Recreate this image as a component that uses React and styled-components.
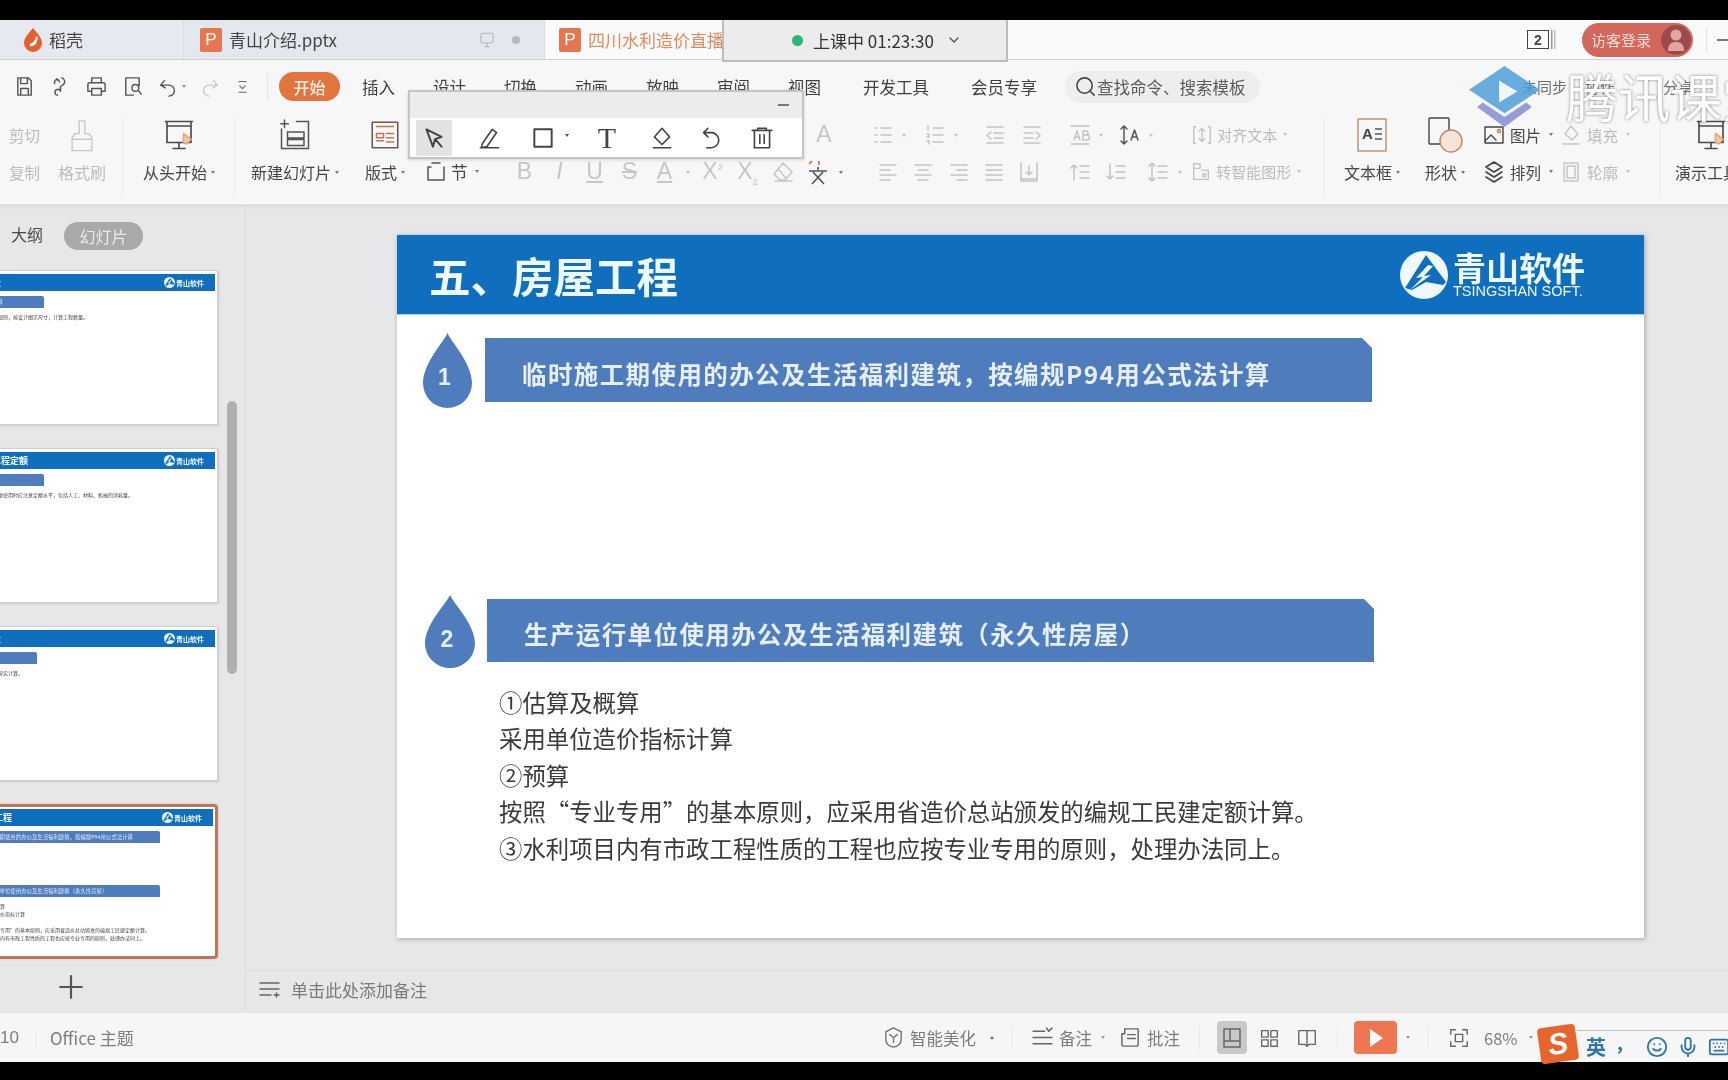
import React from 'react';
import styled, { createGlobalStyle } from 'styled-components';
import { Search, ChevronDown, Mic, Smile, Keyboard } from 'lucide-react';

const CJK = '"Noto Sans CJK SC", "Liberation Sans", sans-serif';

const Global = createGlobalStyle`
  html, body { margin: 0; padding: 0; background: #000; }
  * { box-sizing: border-box; }
`;

const Page = styled.div`
  position: relative;
  width: 1728px;
  height: 1080px;
  overflow: hidden;
  background: #000;
  padding: 20px 0 18px;
  display: flex;
  flex-direction: column;
  font-family: ${CJK};
  color: #444;
  filter: blur(0.6px);
`;

/* tab strip */
const TabBar = styled.div`
  height: 40px;
  flex: none;
  display: flex;
  background: #fafafa;
  border-bottom: 1px solid #cfd0d3;
`;

const Tab = styled.div`
  width: ${p => p.$w}px;
  display: flex;
  align-items: center;
  gap: ${p => p.$gap ?? 7}px;
  padding-left: ${p => p.$pl}px;
  background: ${p => p.$bg};
  border-right: 1px solid #d9dde4;
  font-size: 17px;
  color: ${p => p.$c || '#444'};
  white-space: nowrap;
  overflow: hidden;
`;

const PBadge = styled.span`
  width: 22px;
  height: 24px;
  flex: none;
  background: #e5764f;
  border-radius: 2px;
  color: #fff;
  font: 17px "Liberation Sans", sans-serif;
  display: flex;
  align-items: center;
  justify-content: center;
`;

const TabTail = styled.div`
  margin-left: auto;
  display: flex;
  align-items: center;
  gap: 16px;
  padding-right: 24px;
`;

const TabRight = styled.div`
  margin-left: auto;
  display: flex;
  align-items: center;
`;

const PageCount = styled.span`
  width: 22px;
  height: 19px;
  border: 1.5px solid #444;
  font: bold 14px "Liberation Sans", sans-serif;
  display: flex;
  align-items: center;
  justify-content: center;
  box-shadow: 2px 0 0 #fafafa, 3.5px 0 0 #999, 5px 0 0 #fafafa, 6.5px 0 0 #bbb;
`;

const LoginPill = styled.div`
  width: 111px;
  height: 34px;
  margin-left: 33px;
  border-radius: 17px;
  background: #d2685c;
  color: #f6dcd8;
  font-size: 15px;
  display: flex;
  align-items: center;
  justify-content: space-between;
  padding: 0 2px 0 9px;
`;

const Avatar = styled.span`
  width: 30px;
  height: 30px;
  border-radius: 50%;
  background: #9c4b4c;
  display: flex;
  align-items: center;
  justify-content: center;
`;

const WinSep = styled.span`
  width: 1px;
  height: 22px;
  background: #e0e0e0;
  margin: 0 10px 0 13px;
`;

/* menu row */
const MenuRow = styled.div`
  height: 45px;
  flex: none;
  display: flex;
  align-items: center;
  padding-top: 8px;
  background: #f7f7f8;
`;

const QuickBar = styled.div`
  width: 268px;
  height: 28px;
  flex: none;
  display: flex;
  align-items: center;
  gap: 13px;
  padding-left: 13px;
  border-right: 1px solid #e4e4e4;
`;

const StartPill = styled.div`
  width: 61px;
  height: 29px;
  margin: 0 22px 0 11px;
  border-radius: 15px;
  background: #e2743f;
  color: #fdeee4;
  font-size: 16px;
  font-weight: 500;
  display: flex;
  align-items: center;
  justify-content: center;
`;

const MenuItem = styled.span`
  font-size: 16.5px;
  margin-right: ${p => p.$mr || 38}px;
  color: #3f3f3f;
  white-space: nowrap;
`;

const SearchPill = styled.div`
  width: 195px;
  height: 32px;
  margin-left: 0;
  border-radius: 16px;
  background: #eeeeef;
  padding-left: 9px;
  display: flex;
  align-items: center;
  gap: 0;
  font-size: 16.5px;
  color: #5a5a5a;
  white-space: nowrap;
  overflow: hidden;
`;

const SyncArea = styled.div`
  margin-left: auto;
  display: flex;
  align-items: center;
  width: 237px;
  font-size: 15px;
  color: #6c6c6c;
  white-space: nowrap;
`;

const SyncText = styled.span`
  margin-left: ${p => p.$ml}px;
`;

/* ribbon */
const Ribbon = styled.div`
  height: 100px;
  flex: none;
  display: flex;
  background: #f7f7f8;
  padding: 11px 0 7px;
  border-bottom: 1px solid #dfdfe1;
  box-shadow: 0 2px 3px rgba(0, 0, 0, 0.06);
  position: relative;
  overflow: hidden;
`;

const Group = styled.div`
  width: ${p => p.$w}px;
  flex: none;
  display: flex;
  border-right: ${p => (p.$line ? '1px solid #ececec' : 'none')};
`;

const Big = styled.div`
  width: ${p => p.$w}px;
  flex: none;
  display: flex;
  flex-direction: column;
  align-items: center;
  color: ${p => (p.$off ? '#bdbdbd' : '#454545')};
`;

const BigIcon = styled.div`
  height: 38px;
  display: flex;
  align-items: center;
  justify-content: center;
`;

const BigLabel = styled.div`
  height: 36px;
  font-size: 16px;
  display: flex;
  align-items: center;
  white-space: nowrap;
`;

const Caret = styled.i`
  display: inline-block;
  margin-left: ${p => p.$ml ?? 4}px;
  border-left: 2.5px solid transparent;
  border-right: 2.5px solid transparent;
  border-top: 3px solid ${p => p.$c || '#777'};
  transform: ${p => (p.$up ? 'rotate(180deg)' : 'none')};
`;

const Stack = styled.div`
  width: ${p => p.$w}px;
  flex: none;
  padding-left: ${p => p.$pl || 0}px;
`;

const Row = styled.div`
  height: 37px;
  display: flex;
  align-items: center;
  padding-left: ${p => p.$pl || 0}px;
  justify-content: ${p => p.$end || 'flex-start'};
  gap: ${p => p.$gap || 0}px;
  font-size: ${p => p.$fs || 15.5}px;
  color: ${p => (p.$off ? '#bcbcbc' : '#454545')};
  white-space: nowrap;
`;

const Slot = styled.span`
  position: relative;
  width: ${p => p.$w || 30}px;
  height: 30px;
  flex: none;
  margin-left: ${p => p.$ml || 0}px;
  display: flex;
  align-items: center;
  justify-content: center;
  color: ${p => p.$c || '#c3c3c3'};
`;

const SlotCaret = styled(Caret)`
  position: absolute;
  right: -8px;
  top: 14px;
`;

const FontGlyph = styled.span`
  font: ${p => (p.$b ? 'bold ' : '')}${p => (p.$i ? 'italic ' : '')}23px "Liberation Sans", sans-serif;
  text-decoration: ${p => p.$u || 'none'};
  color: #c6c6c6;
  sup, sub { font-size: 9px; line-height: 0; }
`;

/* work area */
const Work = styled.div`
  flex: 1;
  min-height: 0;
  display: flex;
  background: #e7e7e9;
`;

const Side = styled.aside`
  position: relative;
  width: 246px;
  flex: none;
  border-right: 1px solid #dcdcde;
  overflow: hidden;
`;

const SideTabs = styled.div`
  height: 65px;
  padding-top: 17px;
  padding-left: 11px;
  display: flex;
  align-items: flex-start;
  gap: 21px;
  font-size: 16px;
  color: #4a4a4a;
`;

const OutlineTab = styled.span`
  height: 24px;
  line-height: 24px;
`;

const SlidesTab = styled.span`
  width: 79px;
  height: 28px;
  border-radius: 14px;
  background: #a9a9ab;
  color: #e9e9e9;
  display: flex;
  align-items: center;
  justify-content: center;
`;

const Thumbs = styled.div`
  margin-left: -52px;
  display: flex;
  flex-direction: column;
  gap: 23px;
`;

const Thumb = styled.div`
  width: 270px;
  height: 155px;
  background: #fff;
  padding: ${p => (p.$on ? '2px 0 0 0' : '3px 0 0 0')};
  border: ${p => (p.$on ? '3px solid #b9785a' : '1px solid #cfcfd1')};
  border-radius: ${p => (p.$on ? '4px' : '0')};
  box-shadow: ${p => (p.$on ? '0 0 3px #eebf9f' : '1px 1px 2px rgba(0,0,0,.12)')};
  overflow: hidden;
`;

const ThumbHead = styled.div`
  height: 17px;
  margin-right: 2px;
  background: #0f6ebd;
  padding: 0 11px 0 7px;
  display: flex;
  align-items: center;
  justify-content: space-between;
  color: #f2fbff;
  font-size: 9px;
  font-weight: 700;
`;

const ThumbLogo = styled.span`
  display: flex;
  align-items: center;
  gap: 1px;
  font-size: 7px;
`;

const ThumbBanner = styled.div`
  width: ${p => p.$w}px;
  height: 12px;
  margin: ${p => p.$top}px 0 0 19px;
  background: #4f7cbc;
  border-radius: 0 2px 0 0;
  color: #dfe9f5;
  font-size: 5.4px;
  line-height: 12px;
  padding-left: 8px;
  white-space: nowrap;
  overflow: hidden;
`;

const ThumbLine = styled.div`
  margin: ${p => p.$top || 0}px 0 0 24px;
  font-size: 5px;
  line-height: 8px;
  color: #444;
  white-space: nowrap;
`;

const ScrollThumb = styled.div`
  position: absolute;
  left: 227px;
  top: 196px;
  width: 10px;
  height: 273px;
  border-radius: 5px;
  background: #b0b0b2;
`;

const AddSlide = styled.div`
  margin: 13px 0 0 56px;
  width: 30px;
  height: 30px;
  display: flex;
  align-items: center;
  justify-content: center;
  color: #555;
`;

const Main = styled.main`
  flex: 1;
  min-width: 0;
  display: flex;
  flex-direction: column;
`;

const SlideArea = styled.div`
  flex: 1;
  min-height: 0;
  padding: 30px 0 0 151px;
`;

const Slide = styled.section`
  width: 1247px;
  height: 703px;
  background: #fff;
  box-shadow: 1px 1px 5px rgba(0, 0, 0, 0.3);
`;

const SlideHead = styled.header`
  height: 80px;
  background: #0f6ebd;
  display: flex;
  align-items: center;
  justify-content: space-between;
  padding: 0 59px 0 32px;
  border-bottom: 1px solid #9fdcf5;
`;

const SlideTitle = styled.h1`
  margin: 2px 0 0;
  font-size: 41.5px;
  line-height: 1;
  font-weight: 700;
  color: #eefaff;
`;

const Logo = styled.div`
  display: flex;
  align-items: center;
  gap: 5px;
  color: #eefaff;
`;

const LogoText = styled.div`
  display: flex;
  flex-direction: column;
  width: 132px;
`;

const LogoCn = styled.span`
  font-size: 33px;
  line-height: 33px;
  font-weight: 700;
`;

const LogoEn = styled.span`
  font: 14.5px/14px "Liberation Sans", sans-serif;
  white-space: nowrap;
`;

const Point = styled.div`
  display: flex;
  gap: ${p => p.$gap}px;
  margin: ${p => p.$top}px 0 0 ${p => p.$left}px;
`;

const DropWrap = styled.div`
  position: relative;
  width: ${p => p.$w}px;
  height: ${p => p.$h}px;
  flex: none;
`;

const DropNum = styled.span`
  position: absolute;
  left: 0;
  right: 6px;
  top: 26px;
  text-align: center;
  color: #e6eff8;
  font: bold 23px/36px "Liberation Sans", sans-serif;
`;

const Banner = styled.div`
  width: 887px;
  height: ${p => p.$h}px;
  margin-top: ${p => p.$mt}px;
  background: #4f7cbc;
  clip-path: polygon(0 0, 877px 0, 100% 10px, 100% 100%, 0 100%);
  color: #e6eef6;
  font-size: 24.5px;
  font-weight: 700;
  letter-spacing: ${p => p.$ls}px;
  display: flex;
  align-items: center;
  padding-left: ${p => p.$pl}px;
  padding-top: 6px;
  white-space: nowrap;
`;

const Body = styled.div`
  margin: 16px 0 0 102px;
  font-size: 23.4px;
  line-height: 36.4px;
  color: #3a3a3a;
  white-space: nowrap;
`;

const NotesBar = styled.div`
  height: 43px;
  flex: none;
  border-top: 1px solid #dcdcde;
  display: flex;
  align-items: center;
  gap: 10px;
  padding: 0 0 6px 11px;
  font-size: 17px;
  color: #7a7a7a;
`;

/* status bar */
const StatusBar = styled.footer`
  height: 49px;
  flex: none;
  display: flex;
  align-items: center;
  background: #f6f6f7;
  font-size: 16.500px;
  color: #7c7c7c;
`;

const StatusLeft = styled.div`
  width: 882px;
  flex: none;
  display: flex;
  align-items: center;
  font-size: 17px;
`;

const PageNo = styled.span`
  width: 37px;
  font-family: "Liberation Sans", sans-serif;
  border-right: 1px solid #ebebeb;
`;

const ThemeName = styled.span`
  margin-left: 13px;
`;

const StatusItem = styled.div`
  margin-left: ${p => p.$ml || 0}px;
  display: flex;
  align-items: center;
  gap: ${p => p.$gap ?? 6}px;
  white-space: nowrap;
`;

const StatusSep = styled.span`
  width: 1px;
  height: 26px;
  margin-left: ${p => p.$ml || 0}px;
  background: #ebebeb;
`;

const ViewTile = styled.span`
  width: 30px;
  height: 33px;
  margin-left: ${p => p.$ml || 0}px;
  border-radius: 4px;
  background: ${p => (p.$on ? '#c8c8ca' : 'transparent')};
  display: flex;
  align-items: center;
  justify-content: center;
`;

const PlayBtn = styled.span`
  width: 43px;
  height: 33px;
  margin-left: 16px;
  border-radius: 4px;
  background: #ef7650;
  display: flex;
  align-items: center;
  justify-content: center;
`;

/* overlays */
const LivePopup = styled.div`
  position: absolute;
  left: 722px;
  top: 20px;
  width: 286px;
  height: 42px;
  background: #ececec;
  border: 2px solid #bdbdbd;
  border-top: none;
  display: flex;
  align-items: center;
  padding-left: 68px;
  gap: 10px;
  font-size: 17px;
  color: #333;
  white-space: nowrap;
`;

const LiveDot = styled.span`
  width: 11px;
  height: 11px;
  border-radius: 50%;
  background: #27b874;
`;

const DrawBar = styled.div`
  position: absolute;
  left: 408px;
  top: 90px;
  width: 396px;
  height: 69px;
  background: #fff;
  border: 2px solid #c4c4c4;
  box-shadow: 0 1px 3px rgba(0, 0, 0, 0.15);
`;

const DrawHead = styled.div`
  height: 26px;
  background: #ececed;
  display: flex;
  justify-content: flex-end;
  align-items: center;
  padding-right: 13px;
`;

const Dash = styled.span`
  width: 11px;
  height: 2px;
  flex: none;
  background: #777;
`;

const DrawTools = styled.div`
  display: flex;
  align-items: center;
  height: 40px;
  padding-left: 6px;
`;

const DrawTool = styled.span`
  position: relative;
  width: 36px;
  height: 36px;
  margin-left: ${p => p.$ml || 0}px;
  border-radius: 2px;
  background: ${p => (p.$on ? '#e2e2e2' : 'transparent')};
  color: #444;
  display: flex;
  align-items: center;
  justify-content: center;
`;

const ToolLetter = styled.span`
  font: 30px "Liberation Serif", serif;
  color: #444;
`;

const Watermark = styled.div`
  position: absolute;
  left: 1469px;
  top: 63px;
  display: flex;
  align-items: flex-start;
  gap: 26px;
`;

const WaterText = styled.span`
  font-size: 52px;
  line-height: 58px;
  margin-top: 4px;
  font-weight: 400;
  color: #fff;
  white-space: nowrap;
  text-shadow: 0 0 3px #777;
`;

const Ime = styled.div`
  position: absolute;
  left: 1539px;
  top: 1025px;
  width: 189px;
  height: 37px;
  display: flex;
  align-items: flex-end;
`;

const ImeLogo = styled.span`
  width: 38px;
  height: 36px;
  flex: none;
  background: #e8642d;
  border-radius: 4px;
  transform: rotate(-8deg);
  color: #fff;
  font: italic bold 30px/36px "Liberation Sans", sans-serif;
  text-align: center;
`;

const ImeStrip = styled.div`
  flex: 1;
  height: 32px;
  border-top: 1px solid #bdbdbd;
  background: #f6f6f7;
  display: flex;
  align-items: center;
  gap: 9px;
  padding-left: 9px;
  color: #2f74ad;
`;

const ImeLang = styled.span`
  font-size: 20px;
  font-weight: 700;
`;

const ImeMark = styled.span`
  width: 22px;
  font-size: 18px;
  font-weight: 700;
  margin-top: -8px;
`;

const Svg = ({ s = 24, w, h, vb = '0 0 24 24', c = 'currentColor', sw = 1.5, children }) => (
  <svg width={w || s} height={h || s} viewBox={vb} fill="none" stroke={c} strokeWidth={sw} strokeLinecap="round" strokeLinejoin="round">
    {children}
  </svg>
);

const Line = ({ d, s = 24, c, sw }) => <Svg s={s} c={c} sw={sw}><path d={d} /></Svg>;

const Drop = () => (
  <svg width="100%" height="100%" viewBox="0 0 50 75" preserveAspectRatio="none">
    <path d="M25 0C22 8 0 30 0 50a25 25 0 0 0 50 0C50 30 28 8 25 0Z" fill="#4f7cbc" />
  </svg>
);

const LogoMark = ({ s = 48 }) => (
  <svg width={s} height={s} viewBox="0 0 48 48">
    <circle cx="24" cy="24" r="24" fill="#eefaff" />
    <path d="M26 4 5 37l7 2 14-8 17 3 3-3L26 4Z" fill="#0f6ebd" />
    <path d="M28 14 16 27l7-1-13 13 21-15-7 1 9-10Z" fill="#eefaff" />
  </svg>
);

const paths = {
  bullets: 'M10 5h10M10 12h10M10 19h10M4 5h2M4 12h2M4 19h2',
  numbers: 'M10 5h10M10 12h10M10 19h10M5 3v4M4 11h2v3H4M4 18h2v3',
  outdent: 'M4 4h16M11 10h9M11 15h9M4 20h16M8 9l-4 3.5L8 16',
  indent: 'M4 4h16M4 10h9M4 15h9M4 20h16M16 9l4 3.5-4 3.5',
  ab: 'M3 3h18M3 21h18M6 17l3-9 3 9M7 14h4M15 8h3a2 2 0 0 1 0 4h-3zM15 12h4a2.5 2.5 0 0 1 0 5h-4z',
  spacing: 'M6 3v18M3 6l3-3 3 3M3 18l3 3 3-3M13 17l3.5-10L20 17M14 14h5',
  left: 'M4 5h16M4 10h10M4 15h16M4 20h10',
  center: 'M4 5h16M7 10h10M4 15h16M7 20h10',
  right: 'M4 5h16M10 10h10M4 15h16M10 20h10',
  justify: 'M4 5h16M4 10h16M4 15h16M4 20h16',
  columns: 'M4 3v18h16V3M12 6v9M9 12l3 3 3-3M4 19h16',
  lineUp: 'M5 20V5M2 8l3-3 3 3M11 6h9M11 12h9M11 18h9',
  lineDown: 'M5 4v15M2 16l3 3 3-3M11 6h9M11 12h9M11 18h9',
  lineBoth: 'M5 3v18M2 6l3-3 3 3M2 18l3 3 3-3M11 6h9M11 12h9M11 18h9',
};

const row1 = [
  { d: 'bullets', caret: true, ml: 8 },
  { d: 'numbers', ml: 22, caret: true },
  { d: 'outdent', ml: 30 },
  { d: 'indent', ml: 7 },
  { d: 'ab', ml: 18, caret: true },
  { d: 'spacing', ml: 20, caret: true, c: '#555' },
];

const row2 = [
  { d: 'left', ml: 13 },
  { d: 'center', ml: 5 },
  { d: 'right', ml: 6 },
  { d: 'justify', ml: 5 },
  { d: 'columns', ml: 5 },
  { d: 'lineUp', ml: 22 },
  { d: 'lineDown', ml: 6 },
  { d: 'lineBoth', ml: 12, caret: true },
];

const IconRow = ({ items }) =>
  items.map(it => (
    <Slot key={it.d} $ml={it.ml} $c={it.c}>
      <Line d={paths[it.d]} s={24} />
      {it.caret && <SlotCaret $c="#c3c3c3" />}
    </Slot>
  ));

const thumbs = [
  { title: '三、工程量', banner: 43, first: '工程量计算', lines: ['工程量计算规则，按设计图示尺寸，计算工程数量。'] },
  { title: '二、建筑工程定额', banner: 43, first: '定额说明', lines: ['建筑工程定额使用时应注意定额水平，包括人工、材料、机械的消耗量。'] },
  { title: '四、工程量', banner: 36, first: '工程说明', lines: ['详见规范，按实计算。'] },
];

const ThumbCard = ({ title, children, on }) => (
  <Thumb $on={on}>
    <ThumbHead>
      <span>{title}</span>
      <ThumbLogo><LogoMark s={11} />青山软件</ThumbLogo>
    </ThumbHead>
    {children}
  </Thumb>
);

export default function App() {
  return (
    <Page>
      <Global />
      <TabBar>
        <Tab $w={184} $pl={22} $gap={5} $bg="#e6e9ef">
          <svg width="22" height="26" viewBox="0 0 22 26">
            <path d="M11 1C6 7 2 11 2 16a9 9 0 0 0 18 0C20 11 16 7 11 1Z" fill="#e5602c" />
            <path d="M8 18c4-1 6-4 7-8-1 5-2 9-7 8Z" stroke="#fff" strokeWidth="2" fill="none" />
          </svg>
          稻壳
        </Tab>
        <Tab $w={361} $pl={16} $bg="#e3e7ee">
          <PBadge>P</PBadge>
          青山介绍.pptx
          <TabTail>
            <Svg s={18} c="#b5bac2"><rect x="4" y="3" width="16" height="13" rx="2" /><path d="M12 16v5M9 21h6" /></Svg>
            <svg width="8" height="8"><circle cx="4" cy="4" r="4" fill="#b5bac2" /></svg>
          </TabTail>
        </Tab>
        <Tab $w={180} $pl={14} $bg="#fafafa" $c="#e28a5f">
          <PBadge>P</PBadge>
          四川水利造价直播
        </Tab>
        <TabRight>
          <PageCount>2</PageCount>
          <LoginPill>
            访客登录
            <Avatar>
              <svg width="20" height="24" viewBox="0 0 20 24"><circle cx="10" cy="7" r="5.5" fill="#e4a4a4" /><path d="M2 23c0-7 3-9 8-9s8 2 8 9Z" fill="#e4a4a4" /></svg>
            </Avatar>
          </LoginPill>
          <WinSep />
          <Dash />
        </TabRight>
      </TabBar>

      <MenuRow>
        <QuickBar>
          <Line d="M5 3h11l3 3v15H5zM8 3v6h7V3M8 21v-7h8v7" s={23} c="#555" />
          <Line d="M13 3a4 4 0 0 1 2 7l-3 2v5M8 4l3 3M9 21a3 3 0 1 1 3-4M6 9a3 3 0 0 1 4-4" s={23} c="#555" />
          <Line d="M7 8V3h10v5M5 8h14a2 2 0 0 1 2 2v7h-4M7 17H3v-7a2 2 0 0 1 2-2M7 14h10v7H7z" s={23} c="#555" />
          <Line d="M19 11V3H5v18h8M15 17a3.5 3.5 0 1 0 0-7 3.5 3.5 0 0 0 0 7ZM18 16l3 4" s={23} c="#555" />
          <StatusItem $gap={3}>
            <Line d="M8 5 4 10l5 3M4 10h9a6 6 0 0 1 0 12" s={22} c="#555" />
            <Caret $c="#999" $ml={0} />
          </StatusItem>
          <Line d="M16 5l4 5-5 3M20 10h-9a6 6 0 0 0 0 12" s={22} c="#c9c9c9" />
          <Line d="M7 5h10M8 11l4 4 4-4M7 20h10" s={17} c="#666" />
        </QuickBar>
        <StartPill>开始</StartPill>
        <MenuItem>插入</MenuItem>
        <MenuItem>设计</MenuItem>
        <MenuItem>切换</MenuItem>
        <MenuItem>动画</MenuItem>
        <MenuItem>放映</MenuItem>
        <MenuItem>审阅</MenuItem>
        <MenuItem $mr={42}>视图</MenuItem>
        <MenuItem $mr={42}>开发工具</MenuItem>
        <MenuItem $mr={28}>会员专享</MenuItem>
        <SearchPill><Search size={23} color="#444" strokeWidth={1.6} />查找命令、搜索模板</SearchPill>
        <SyncArea>
          <SyncText $ml={31}>未同步</SyncText>
          <SyncText $ml={18}>协作</SyncText>
          <SyncText $ml={48}>分享</SyncText>
        </SyncArea>
      </MenuRow>

      <Ribbon>
        <Group $w={123} $line>
          <Stack $w={57} $pl={9}>
            <Row $off>剪切</Row>
            <Row $off>复制</Row>
          </Stack>
          <Big $w={50} $off>
            <BigIcon><Line d="M10 2h4v9h3l2 3v9H5v-9l2-3h3zM5 15h14" s={34} sw={1} c="#c9c9c9" /></BigIcon>
            <BigLabel>格式刷</BigLabel>
          </Big>
        </Group>
        <Group $w={112} $line>
          <Big $w={112}>
            <BigIcon>
              <Svg s={36} sw={1.1} c="#4a4a4a">
                <path d="M3 3h18M4 3v14h16V3M12 17v4M8 21h8M4 6h16" />
                <path d="M15 11l5 4-3 3-2-1z" fill="#f3c9a8" stroke="#e8a67a" />
              </Svg>
            </BigIcon>
            <BigLabel>从头开始<Caret /></BigLabel>
          </Big>
        </Group>
        <Group $w={270}>
          <Big $w={120}>
            <BigIcon>
              <Svg s={36} sw={1} c="#555">
                <path d="M13 3h8v18H3V8M5 2v5M2.500 4.500h5M7 10h11v4H7zM7 15h11v4H7z" />
              </Svg>
            </BigIcon>
            <BigLabel>新建幻灯片<Caret /></BigLabel>
          </Big>
          <Big $w={60}>
            <BigIcon>
              <Svg s={34} sw={1.1} c="#6a5a50">
                <rect x="3" y="3" width="18" height="18" />
                <path d="M6 6h12M6 11h5v3H6zM6 16h5M13 11h5M13 14h5M13 17h5" stroke="#b87a58" />
              </Svg>
            </BigIcon>
            <BigLabel>版式<Caret /></BigLabel>
          </Big>
          <Stack $w={90} $pl={9}>
            <Row />
            <Row $gap={3} $fs={16.5}>
              <Line d="M4 7v13h16V7M8 3h8M4 7h3" s={24} c="#555" />
              节<Caret />
            </Row>
          </Stack>
        </Group>
        <Group $w={355}>
          <Stack $w={355}>
            <Row $end="flex-end"><Slot $w={50}><FontGlyph>A</FontGlyph></Slot><Slot $w={11} /></Row>
            <Row>
              <Slot $w={35} $ml={2}><FontGlyph>B</FontGlyph></Slot>
              <Slot $w={35}><FontGlyph $i>I</FontGlyph></Slot>
              <Slot $w={35}><FontGlyph $u="underline">U</FontGlyph></Slot>
              <Slot $w={35}><FontGlyph $u="line-through">S</FontGlyph></Slot>
              <Slot $w={35}><FontGlyph $u="underline">A</FontGlyph><SlotCaret $c="#c3c3c3" /></Slot>
              <Slot $w={35} $ml={13}><FontGlyph>X<sup>2</sup></FontGlyph></Slot>
              <Slot $w={35}><FontGlyph>X<sub>2</sub></FontGlyph></Slot>
              <Slot $w={35}><Line d="M12 3l9 9-7 8H9l-6-6zM7 9l8 9M4 21h17" s={24} c="#c6c6c6" /></Slot>
              <Slot $w={35} $c="#444">
                <svg width="24" height="26" viewBox="0 0 24 26" fill="none" stroke="#555" strokeWidth="1.6"><path d="M12 8v3M3 12h18M7 13l11 12M17 13 6 25" /><path d="M3 5l3-3M13 2v4" stroke="#c56a4a" /></svg>
                <SlotCaret />
              </Slot>
            </Row>
          </Stack>
        </Group>
        <Group $w={465} $line>
          <Stack $w={465}>
            <Row $off $fs={15}>
              <IconRow items={row1} />
              <Slot $ml={45} $w={24}><Line d="M5 3H3v18h2M19 3h2v18h-2M12 5v14M9 8l3-3 3 3M9 16l3 3 3-3" s={22} /></Slot>
              &nbsp;对齐文本<Caret $c="#c3c3c3" $ml={6} />
            </Row>
            <Row $off $fs={15}>
              <IconRow items={row2} />
              <Slot $ml={15} $w={24}><Line d="M4 3h7v5H4zM4 8v12h16V10h-7M14 14h3v3h-3z" s={22} /></Slot>
              &nbsp;转智能图形<Caret $c="#c3c3c3" $ml={6} />
            </Row>
          </Stack>
        </Group>
        <Group $w={336} $line>
          <Big $w={94}>
            <BigIcon>
              <svg width="32" height="38" viewBox="0 0 32 38" fill="none">
                <rect x="2" y="3" width="28" height="32" stroke="#c08a70" strokeWidth="1.4" />
                <text x="6" y="23" fontFamily="Liberation Sans" fontWeight="700" fontSize="15" fill="#444">A</text>
                <path d="M19 13h7M19 18h7M19 23h7" stroke="#555" strokeWidth="1.3" />
              </svg>
            </BigIcon>
            <BigLabel>文本框<Caret /></BigLabel>
          </Big>
          <Big $w={52}>
            <BigIcon>
              <svg width="36" height="38" viewBox="0 0 36 38" fill="none">
                <rect x="2" y="2" width="20" height="26" rx="1" stroke="#444" strokeWidth="1.4" />
                <circle cx="24" cy="25" r="11" fill="#f7e4d8" stroke="#b98a70" strokeWidth="1.4" />
              </svg>
            </BigIcon>
            <BigLabel>形状<Caret /></BigLabel>
          </Big>
          <Stack $w={88} $pl={11}>
            <Row $gap={4}>
              <Svg s={24} sw={1.4} c="#444"><rect x="3" y="4" width="18" height="16" /><path d="M3 18l6-6 5 5" /><circle cx="17" cy="8" r="1.500" stroke="#c57a55" /></Svg>
              图片<Caret />
            </Row>
            <Row $gap={4}>
              <Svg s={24} sw={1.6} c="#444"><path d="M12 2l8 5-8 5-8-5zM4 12l8 5 8-5M4 17l8 5 8-5" /></Svg>
              排列<Caret />
            </Row>
          </Stack>
          <Stack $w={90}>
            <Row $off $gap={4}>
              <Line d="M12 3l7 8-6 6-7-6zM4 21h16" s={24} c="#c6c6c6" />
              填充<Caret $c="#c3c3c3" />
            </Row>
            <Row $off $gap={4}>
              <Line d="M5 3h14v18H5zM8 6h8v12H8z" s={24} c="#c6c6c6" />
              轮廓<Caret $c="#c3c3c3" />
            </Row>
          </Stack>
        </Group>
        <Group $w={100}>
          <Big $w={100}>
            <BigIcon>
              <Svg s={36} sw={1.1} c="#4a4a4a">
                <path d="M3 3h18M4 3v14h16V3M12 17v4M8 21h8M4 6h16" />
                <path d="M15 11l5 4-3 3-2-1z" fill="#f3c9a8" stroke="#e8a67a" />
              </Svg>
            </BigIcon>
            <BigLabel>演示工具<Caret /></BigLabel>
          </Big>
        </Group>
      </Ribbon>

      <Work>
        <Side>
          <SideTabs>
            <OutlineTab>大纲</OutlineTab>
            <SlidesTab>幻灯片</SlidesTab>
          </SideTabs>
          <Thumbs>
            {thumbs.map(t => (
              <ThumbCard key={t.title} title={t.title}>
                <ThumbBanner $w={t.banner + 33} $top={5}>{t.first}</ThumbBanner>
                {t.lines.map(l => <ThumbLine key={l} $top={5}>{l}</ThumbLine>)}
              </ThumbCard>
            ))}
            <ThumbCard title="五、房屋工程" on>
              <ThumbBanner $w={190} $top={5}>临时施工期使用的办公及生活福利建筑，按编规P94用公式法计算</ThumbBanner>
              <ThumbBanner $w={190} $top={42}>生产运行单位使用办公及生活福利建筑（永久性房屋）</ThumbBanner>
              <ThumbLine $top={5}>①估算及概算</ThumbLine>
              <ThumbLine>采用单位造价指标计算</ThumbLine>
              <ThumbLine>②预算</ThumbLine>
              <ThumbLine>按照“专业专用”的基本原则，应采用省造价总站颁发的编规工民建定额计算。</ThumbLine>
              <ThumbLine>③水利项目内有市政工程性质的工程也应按专业专用的原则，处理办法同上。</ThumbLine>
            </ThumbCard>
          </Thumbs>
          <AddSlide><Line d="M12 2v20M2 12h20" s={26} sw={2} /></AddSlide>
          <ScrollThumb />
        </Side>

        <Main>
          <SlideArea>
            <Slide>
              <SlideHead>
                <SlideTitle>五、房屋工程</SlideTitle>
                <Logo>
                  <LogoMark />
                  <LogoText>
                    <LogoCn>青山软件</LogoCn>
                    <LogoEn>TSINGSHAN SOFT.</LogoEn>
                  </LogoText>
                </Logo>
              </SlideHead>
              <Point $gap={13} $top={18} $left={26}>
                <DropWrap $w={49} $h={75}><Drop /><DropNum>1</DropNum></DropWrap>
                <Banner $h={64} $mt={5} $pl={37} $ls={1.4}>临时施工期使用的办公及生活福利建筑，按编规P94用公式法计算</Banner>
              </Point>
              <Point $gap={12} $top={187} $left={28}>
                <DropWrap $w={50} $h={73}><Drop /><DropNum>2</DropNum></DropWrap>
                <Banner $h={63} $mt={4} $pl={37} $ls={1.4}>生产运行单位使用办公及生活福利建筑（永久性房屋）</Banner>
              </Point>
              <Body>
                ①估算及概算<br />
                采用单位造价指标计算<br />
                ②预算<br />
                按照“专业专用”的基本原则，应采用省造价总站颁发的编规工民建定额计算。<br />
                ③水利项目内有市政工程性质的工程也应按专业专用的原则，处理办法同上。
              </Body>
            </Slide>
          </SlideArea>
          <NotesBar>
            <Line d="M3 6h19M3 12h19M3 18h11M17 18h5M19.500 16v4" s={24} c="#666" sw={1.5} />
            单击此处添加备注
          </NotesBar>
        </Main>
      </Work>

      <StatusBar>
        <StatusLeft>
          <PageNo>10</PageNo>
          <ThemeName>Office 主题</ThemeName>
        </StatusLeft>
        <StatusItem $gap={5}>
          <Line d="M12 2l8 4v8a8 8 0 0 1-16 0V6zM8 9l4 3 4-3M12 12v5" s={23} c="#777" />
          智能美化
          <Caret $c="#666" $ml={9} $up />
        </StatusItem>
        <StatusSep $ml={18} />
        <StatusItem $ml={17} $gap={4}>
          <Line d="M3 6h11M3 12h18M3 18h18M16 3l2 3 3-3" s={25} c="#666" />
          备注<Caret $c="#999" $ml={5} />
        </StatusItem>
        <StatusItem $ml={14} $gap={5}>
          <Line d="M6 3h14v16a2 2 0 0 1-2 2H5a2 2 0 0 1-2-2V8h3zM9 9h8M9 13h8" s={23} c="#666" />
          批注
        </StatusItem>
        <StatusSep $ml={19} />
        <ViewTile $on $ml={17}><Line d="M4 3h16v18H4zM4 15h16M10 3v12" s={24} c="#666" /></ViewTile>
        <ViewTile $ml={7}><Line d="M4 4h7v7H4zM14 4h7v7h-7zM4 14h7v7H4zM14 14h7v7h-7z" s={22} c="#666" /></ViewTile>
        <ViewTile $ml={8}><Line d="M3 4h18v15h-7l-2 2-2-2H3zM12 4v15" s={22} c="#666" /></ViewTile>
        <StatusSep $ml={15} />
        <PlayBtn>
          <svg width="16" height="20" viewBox="0 0 16 20"><path d="M2 1l13 9L2 19Z" fill="#fff" /></svg>
        </PlayBtn>
        <Caret $c="#999" $ml={9} />
        <StatusSep $ml={18} />
        <ViewTile $ml={15}><Line d="M8 3H3v5M16 3h5v5M8 21H3v-5M16 21h5v-5M8 8h8v8H8z" s={22} c="#666" /></ViewTile>
        <StatusItem $ml={10}>68%<Caret $c="#999" $ml={5} /></StatusItem>
      </StatusBar>

      <LivePopup>
        <LiveDot />
        上课中 01:23:30
        <ChevronDown size={16} color="#555" style={{ marginLeft: 2 }} />
      </LivePopup>

      <DrawBar>
        <DrawHead><Dash /></DrawHead>
        <DrawTools>
          <DrawTool $on>
            <Line d="M5 4l14 7-6 2-2 7zM13 13l6 7" s={26} sw={1.8} />
          </DrawTool>
          <DrawTool $ml={19}><Line d="M4 21h17M6 17l9-13 4 3-9 13-5 1z" s={26} /></DrawTool>
          <DrawTool $ml={18}><Line d="M4 4h16v16H4z" s={26} sw={1.8} /><SlotCaret $c="#555" /></DrawTool>
          <DrawTool $ml={28}><ToolLetter>T</ToolLetter></DrawTool>
          <DrawTool $ml={19}><Line d="M12 3l7 8-7 7-7-7zM4 21h16" s={26} /></DrawTool>
          <DrawTool $ml={11}><Line d="M11 3 7 7l4 4M7 7h7a5 5 0 0 1 0 14h-4" s={26} /></DrawTool>
          <DrawTool $ml={17}><Line d="M3 5h18M8 5V3h8v2M5 5v16h14V5M10 9v8M14 9v8" s={26} /></DrawTool>
        </DrawTools>
      </DrawBar>

      <Watermark>
        <svg width="71" height="67" viewBox="0 0 78 67">
          <path d="M39 0 78 26 39 52 0 26Z" fill="#4d9fd8" opacity=".85" />
          <path d="M15 40 39 56 63 40l6 5-30 22L9 45Z" fill="#6f74cf" opacity=".7" />
          <path d="M33 16 53 28 33 40Z" fill="#fff" opacity=".9" />
        </svg>
        <WaterText>腾讯课堂</WaterText>
      </Watermark>

      <Ime>
        <ImeLogo>S</ImeLogo>
        <ImeStrip>
          <ImeLang>英</ImeLang>
          <ImeMark>，</ImeMark>
          <Smile size={22} />
          <Mic size={22} />
          <Keyboard size={22} />
        </ImeStrip>
      </Ime>
    </Page>
  );
}
